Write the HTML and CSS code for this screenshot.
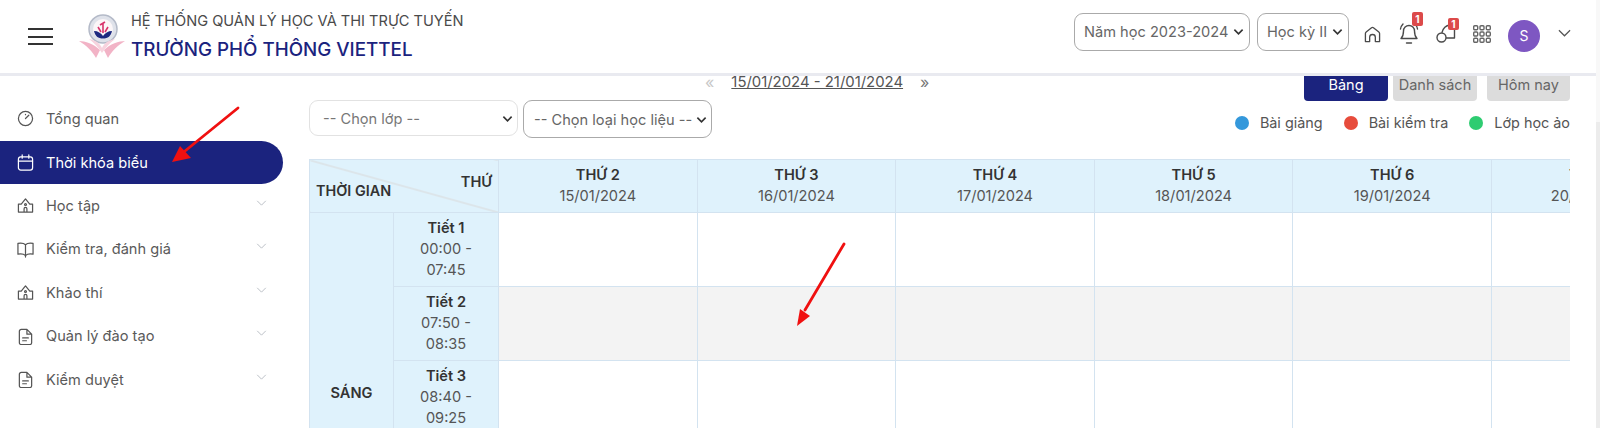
FILE: index.html
```html
<!DOCTYPE html>
<html lang="vi">
<head>
<meta charset="utf-8">
<title>Thời khóa biểu</title>
<link rel="stylesheet" href="styles.css">
</head>
<body>
<header class="topbar">
  <button class="burger" aria-label="Menu"><span></span><span></span><span></span></button>
  <svg class="logo" viewBox="0 0 48 46" aria-hidden="true">
    <circle cx="25" cy="17" r="14" fill="#dfe2ea" stroke="#b4bac8" stroke-width="1.500"/>
    <circle cx="25" cy="17" r="10" fill="#fbf6f8"/>
    <path d="M16 19c4 0 7 2 9 5 2-3 5-5 9-5-1 5-4 7.500-9 7.500S17 24 16 19z" fill="#1d2a80"/>
    <path d="M25 11v10M22 13l5-3M20 15l3 5M30 15l-3 5" stroke="#d8336b" stroke-width="1.600" fill="none"/>
    <path d="M1 29c6 0 15 3 21 9l-4 8c-3-6-10-13-17-17zM47 29c-6 0-15 3-21 9l4 8c3-6 10-13 17-17z" fill="#f2b3c6"/>
    <path d="M11 27c6 1 11 4 13 9 2-5 7-8 13-9-5 4-9 8-13 14-4-6-8-10-13-14z" fill="#f7d3de"/>
  </svg>
  <div class="brand">
    <div class="brand-sub">HỆ THỐNG QUẢN LÝ HỌC VÀ THI TRỰC TUYẾN</div>
    <div class="brand-name">TRƯỜNG PHỔ THÔNG VIETTEL</div>
  </div>
  <div class="top-actions">
    <div class="select top-year"><span class="select-text">Năm học 2023-2024</span><svg class="caret" viewBox="0 0 12 8"><path d="M1.500 1.500 6 6l4.500-4.500"/></svg></div>
    <div class="select top-term"><span class="select-text">Học kỳ II</span><svg class="caret" viewBox="0 0 12 8"><path d="M1.500 1.500 6 6l4.500-4.500"/></svg></div>
    <svg class="ticon home" viewBox="0 0 18 18"><path d="M1.500 16.500V8c0-.8.3-1.300.8-1.700L8 1.800a1.600 1.600 0 0 1 2 0l5.700 4.500c.5.400.8.900.8 1.700v8.500H12v-4.500a3 3 0 0 0-6 0v4.500z"/></svg>
    <div class="notif bell">
      <svg class="ticon" viewBox="0 0 20 22"><path d="M10 2.500a5.500 5.500 0 0 0-5.500 5.500c0 4.500-1.500 6.500-2.500 7.500h16c-1-1-2.500-3-2.500-7.500A5.500 5.500 0 0 0 10 2.500zM7.500 20h5M1.500 6C1.800 4 2.500 2.500 4 1M18.500 6c-.3-2-1-3.500-2.500-5"/></svg>
      <span class="count">1</span>
    </div>
    <div class="notif chat">
      <svg class="ticon" viewBox="0 0 20 19"><path d="M6 8.500C7 4.500 10 1.500 14 1M18.500 5v9H10M5.500 9a4.500 4.500 0 1 1 0 9A4.500 4.500 0 0 1 1 13.500 4.500 4.500 0 0 1 5.500 9z"/></svg>
      <span class="count">1</span>
    </div>
    <svg class="apps" viewBox="0 0 18 18"><g><rect x=".7" y=".7" width="4" height="4" rx="1"/><rect x="7" y=".7" width="4" height="4" rx="1"/><rect x="13.300" y=".7" width="4" height="4" rx="1"/><rect x=".7" y="7" width="4" height="4" rx="1"/><rect x="7" y="7" width="4" height="4" rx="1"/><rect x="13.300" y="7" width="4" height="4" rx="1"/><rect x=".7" y="13.300" width="4" height="4" rx="1"/><rect x="7" y="13.300" width="4" height="4" rx="1"/><rect x="13.300" y="13.300" width="4" height="4" rx="1"/></g></svg>
    <div class="avatar">S</div>
    <svg class="user-caret" viewBox="0 0 14 8"><path d="M1 1l6 6 6-6"/></svg>
  </div>
</header>

<div class="shell">
  <nav class="sidebar">
    <a class="nav-item"><svg class="nav-icon" viewBox="0 0 18 18"><circle cx="9" cy="9" r="7.500"/><path d="M9 9l3.500-3.500M9 4.500v.5"/></svg><span class="nav-label">Tổng quan</span></a>
    <a class="nav-item active"><svg class="nav-icon" viewBox="0 0 18 18"><rect x="1.500" y="3" width="15" height="14" rx="2.500"/><path d="M1.500 7.500h15M5.500 1v3.500M12.500 1v3.500"/></svg><span class="nav-label">Thời khóa biểu</span></a>
    <a class="nav-item"><svg class="nav-icon" viewBox="0 0 18 18"><path d="M1.500 16V7.500h3L9 2l4.500 5.500h3V16zM7.500 16v-3.500a1.500 1.500 0 0 1 3 0V16"/><circle cx="9" cy="8" r="1"/></svg><span class="nav-label">Học tập</span><svg class="nav-caret" viewBox="0 0 12 7"><path d="M1 1l5 5 5-5"/></svg></a>
    <a class="nav-item"><svg class="nav-icon" viewBox="0 0 18 18"><path d="M9 4C7.500 2.500 4 2 1 2.500v11.500c3-.5 6.500 0 8 1.500 1.500-1.500 5-2 8-1.500V2.500C14 2 10.500 2.500 9 4zM9 4v13"/></svg><span class="nav-label">Kiểm tra, đánh giá</span><svg class="nav-caret" viewBox="0 0 12 7"><path d="M1 1l5 5 5-5"/></svg></a>
    <a class="nav-item"><svg class="nav-icon" viewBox="0 0 18 18"><path d="M1.500 16V7.500h3L9 2l4.500 5.500h3V16zM7.500 16v-3.500a1.500 1.500 0 0 1 3 0V16"/><circle cx="9" cy="8" r="1"/></svg><span class="nav-label">Khảo thí</span><svg class="nav-caret" viewBox="0 0 12 7"><path d="M1 1l5 5 5-5"/></svg></a>
    <a class="nav-item"><svg class="nav-icon" viewBox="0 0 18 18"><path d="M2.500 3.500A2 2 0 0 1 4.500 1.500h6l5 5v9a2 2 0 0 1-2 2h-9a2 2 0 0 1-2-2zM10.500 1.500V6.500h5M6 10.500h6M6 13.500h4"/></svg><span class="nav-label">Quản lý đào tạo</span><svg class="nav-caret" viewBox="0 0 12 7"><path d="M1 1l5 5 5-5"/></svg></a>
    <a class="nav-item"><svg class="nav-icon" viewBox="0 0 18 18"><path d="M2.500 3.500A2 2 0 0 1 4.500 1.500h6l5 5v9a2 2 0 0 1-2 2h-9a2 2 0 0 1-2-2zM10.500 1.500V6.500h5M6 10.500h6M6 13.500h4"/></svg><span class="nav-label">Kiểm duyệt</span><svg class="nav-caret" viewBox="0 0 12 7"><path d="M1 1l5 5 5-5"/></svg></a>
  </nav>

  <main class="content">
    <div class="week-row">
      <div class="week-nav">
        <span class="week-arrow muted">«</span>
        <span class="week-range">15/01/2024 - 21/01/2024</span>
        <span class="week-arrow">»</span>
      </div>
      <div class="view-tabs">
        <button class="tab tab-on">Bảng</button>
        <button class="tab tab-list">Danh sách</button>
        <button class="tab tab-today">Hôm nay</button>
      </div>
    </div>
    <div class="filter-row">
      <div class="select f-class"><span class="select-text">-- Chọn lớp --</span><svg class="caret" viewBox="0 0 12 8"><path d="M1.500 1.500 6 6l4.500-4.500"/></svg></div>
      <div class="select f-type"><span class="select-text">-- Chọn loại học liệu --</span><svg class="caret" viewBox="0 0 12 8"><path d="M1.500 1.500 6 6l4.500-4.500"/></svg></div>
      <ul class="legend">
        <li><i class="dot blue"></i>Bài giảng</li>
        <li><i class="dot red"></i>Bài kiểm tra</li>
        <li><i class="dot green"></i>Lớp học ảo</li>
      </ul>
    </div>
    <div class="table-clip">
      <table class="tt">
        <colgroup><col class="c-session"><col class="c-period"><col class="c-day"><col class="c-day"><col class="c-day"><col class="c-day"><col class="c-day"><col class="c-day"></colgroup>
        <thead>
          <tr>
            <th colspan="2" class="corner"><span class="corner-thu">THỨ</span><span class="corner-time">THỜI GIAN</span></th>
            <th><b>THỨ 2</b><span>15/01/2024</span></th>
            <th><b>THỨ 3</b><span>16/01/2024</span></th>
            <th><b>THỨ 4</b><span>17/01/2024</span></th>
            <th><b>THỨ 5</b><span>18/01/2024</span></th>
            <th><b>THỨ 6</b><span>19/01/2024</span></th>
            <th><b>THỨ 7</b><span>20/01/2024</span></th>
          </tr>
        </thead>
        <tbody>
          <tr><td rowspan="5" class="session">SÁNG</td><td class="period"><b>Tiết 1</b><span>00:00 - 07:45</span></td><td></td><td></td><td></td><td></td><td></td><td></td></tr>
          <tr class="alt"><td class="period"><b>Tiết 2</b><span>07:50 - 08:35</span></td><td></td><td></td><td></td><td></td><td></td><td></td></tr>
          <tr><td class="period"><b>Tiết 3</b><span>08:40 - 09:25</span></td><td></td><td></td><td></td><td></td><td></td><td></td></tr>
          <tr class="alt"><td class="period"><b>Tiết 4</b><span>09:30 - 10:15</span></td><td></td><td></td><td></td><td></td><td></td><td></td></tr>
          <tr><td class="period"><b>Tiết 5</b><span>10:20 - 11:05</span></td><td></td><td></td><td></td><td></td><td></td><td></td></tr>
        </tbody>
      </table>
    </div>
  </main>
</div>

<svg class="annot annot-a" viewBox="0 0 70 60"><path d="M68 2 15 45"/><polygon points="2,56 10,40 21,52"/></svg>
<svg class="annot annot-b" viewBox="0 0 50 90"><path d="M48 2 9 68"/><polygon points="1,84 4,67 14,74"/></svg>
<div class="scroll-track"><div class="scroll-thumb"></div></div>
</body>
</html>
```
FILE: styles.css
```css
* { box-sizing: border-box; }
html, body { margin: 0; height: 100%; overflow: hidden; }
body { font-family: Inter, "Noto Sans", sans-serif; color: #555; background: #fff; font-size: 14.6px; }

.topbar { height: 76px; border-bottom: 3px solid #e9eaf0; display: flex; align-items: flex-start; background: #fff; position: relative; z-index: 2; }
.burger { width: 25px; height: 17px; margin: 28px 25px 0 28px; padding: 0; border: 0; background: none; display: flex; flex-direction: column; justify-content: space-between; }
.burger span { display: block; height: 2px; background: #333; }
.logo { width: 48px; height: 46px; margin-top: 12px; flex: none; }
.brand { margin: 12px 0 0 5px; }
.brand-sub { font-size: 14.600px; line-height: 19px; color: #4a4a4a; }
.brand-name { font-size: 18.800px; line-height: 22px; margin-top: 8px; font-weight: 500; color: #1b237e; }
.top-actions { margin-left: auto; display: flex; align-items: flex-start; padding: 13px 29px 0 0; }

.select { display: flex; align-items: center; justify-content: space-between; border: 1px solid #aaa; border-radius: 9px; background: #fff; color: #666; white-space: nowrap; }
.caret { width: 11px; height: 8px; flex: none; }
.caret path { fill: none; stroke: #333; stroke-width: 1.800; }
.top-year { width: 176px; height: 38px; padding: 0 5px 0 9px; }
.top-term { width: 92px; height: 38px; margin-left: 7px; padding: 0 5px 0 9px; overflow: hidden; }

.ticon { fill: none; stroke: #4a4a4a; stroke-width: 1.400; stroke-linejoin: round; stroke-linecap: round; display: block; }
.home { width: 17px; height: 17px; margin: 13px 0 0 15px; }
.notif { position: relative; width: 20px; }
.notif .ticon { width: 20px; }
.bell { height: 22px; margin: 10px 0 0 18px; }
.bell .ticon { height: 22px; }
.chat { height: 19px; margin: 11px 0 0 17px; }
.chat .ticon { height: 19px; }
.count { position: absolute; background: #dc4a4a; color: #fff; border-radius: 2px; font-size: 10px; font-weight: 700; text-align: center; }
.bell .count { top: -11px; right: -4px; width: 11px; height: 14px; line-height: 14px; }
.chat .count { top: -6px; right: -3px; width: 11px; height: 12px; line-height: 12px; }
.apps { width: 18px; height: 18px; margin: 12px 0 0 17px; }
.apps rect { fill: none; stroke: #666; stroke-width: 1.400; }
.avatar { width: 32px; height: 32px; margin: 7px 0 0 17px; border-radius: 50%; background: #7e57c2; color: #fff; font-size: 14px; line-height: 32px; text-align: center; }
.user-caret { width: 13px; height: 8px; margin: 16px 0 0 18px; fill: none; stroke: #555; stroke-width: 1.300; }

.shell { display: flex; }
.sidebar { width: 283px; flex: none; padding-top: 21px; }
.nav-item { height: 43.500px; display: flex; align-items: center; padding: 0 16px 0 17px; color: #5a5a5a; font-size: 14.600px; }
.nav-icon { width: 17px; height: 17px; fill: none; stroke: #555; stroke-width: 1.300; stroke-linejoin: round; stroke-linecap: round; flex: none; margin-right: 12px; }
.nav-label { flex: 1; }
.nav-caret { width: 11px; height: 6px; fill: none; stroke: #b8bcc4; stroke-width: 1.100; margin: -6px 0 0; }
.nav-item.active { background: #1b237e; color: #fff; border-radius: 0 22px 22px 0; }
.active .nav-label { padding-top: 2px; }
.active .nav-icon { stroke: #fff; }

.content { flex: 1; min-width: 0; padding: 0 30px 0 26px; }
.week-row { height: 25px; display: flex; justify-content: space-between; align-items: flex-start; }
.week-nav { display: flex; align-items: center; margin-left: 396px; height: 12px; color: #555; font-size: 14.900px; }
.week-range { text-decoration: underline; margin: 0 17px 0 17px; }
.week-arrow { font-size: 16px; color: #777; }
.week-arrow.muted { color: #c8c8c8; }
.view-tabs { display: flex; gap: 5px; }
.tab { width: 84px; height: 25px; border: 0; padding: 0 0 9px; border-radius: 0 0 4px 4px; background: #dcdcdc; color: #666; font: 14.500px Inter, sans-serif; }
.tab-today { width: 83px; margin-left: 5px; }
.tab-on { background: #1b237e; color: #fff; }

.filter-row { display: flex; align-items: flex-start; gap: 5px; height: 59px; margin-top: -1px; }
.f-class { width: 209px; height: 36px; padding: 2px 4px 0 13px; border-color: #e2e2e2; color: #777; }
.f-type { width: 189px; height: 38px; padding: 2px 4px 0 10px; color: #666; }
.legend { list-style: none; margin: 13px 0 0 auto; padding: 0; display: flex; gap: 21px; }
.legend li { display: flex; align-items: center; color: #555; font-size: 14.400px; line-height: 20px; }
.dot { width: 14px; height: 14px; border-radius: 50%; margin-right: 11px; }
.blue { background: #3498db; }
.red { background: #e74c3c; }
.green { background: #2ecc71; }

.table-clip { overflow: hidden; }
.tt { border-collapse: collapse; table-layout: fixed; width: 1380.600px; }
.c-session { width: 84px; }
.c-period { width: 105px; }
.c-day { width: 198.600px; }
.tt th, .tt td { border: 1px solid #d3e3f0; padding: 0; text-align: center; vertical-align: middle; }
.tt thead tr { height: 53px; }
.tt th { background: #dff2fc; font-weight: 400; color: #555; line-height: 21px; }
.tt th b { display: block; font-weight: 600; color: #333; }
.tt th span { display: block; }
.tt tbody tr { height: 74px; }
.corner { position: relative; background: linear-gradient(to top right, transparent calc(50% - 1px), #d9d9d9, transparent calc(50% + 1px)) #dff2fc !important; }
.corner-thu { position: absolute; top: 12px; right: 6px; font-weight: 600; color: #333; }
.corner-time { position: absolute; top: 20px; left: 6px; font-weight: 600; color: #333; font-size: 14.400px; }
.session { background: #dff2fc; font-weight: 600; color: #333; padding-bottom: 10px !important; }
.period { background: #dff2fc; line-height: 21px; color: #555; padding: 0 18px !important; }
.period b { display: block; font-weight: 600; color: #333; }
.period span { display: block; }
.alt td:not(.period) { background: #f3f3f3; }

.annot { position: absolute; z-index: 3; fill: #f01010; }
.annot path { stroke: #f01010; stroke-width: 2.800; fill: none; stroke-linecap: round; }
.annot-a { left: 170px; top: 106px; width: 70px; height: 60px; }
.annot-b { left: 796px; top: 242px; width: 50px; height: 90px; }

.scroll-track { position: absolute; top: 0; right: 0; bottom: 0; width: 4px; background: #f8f8f8; z-index: 4; }
.scroll-thumb { position: absolute; top: 122px; left: 0; right: 0; bottom: 0; background: #ececec; }
```
